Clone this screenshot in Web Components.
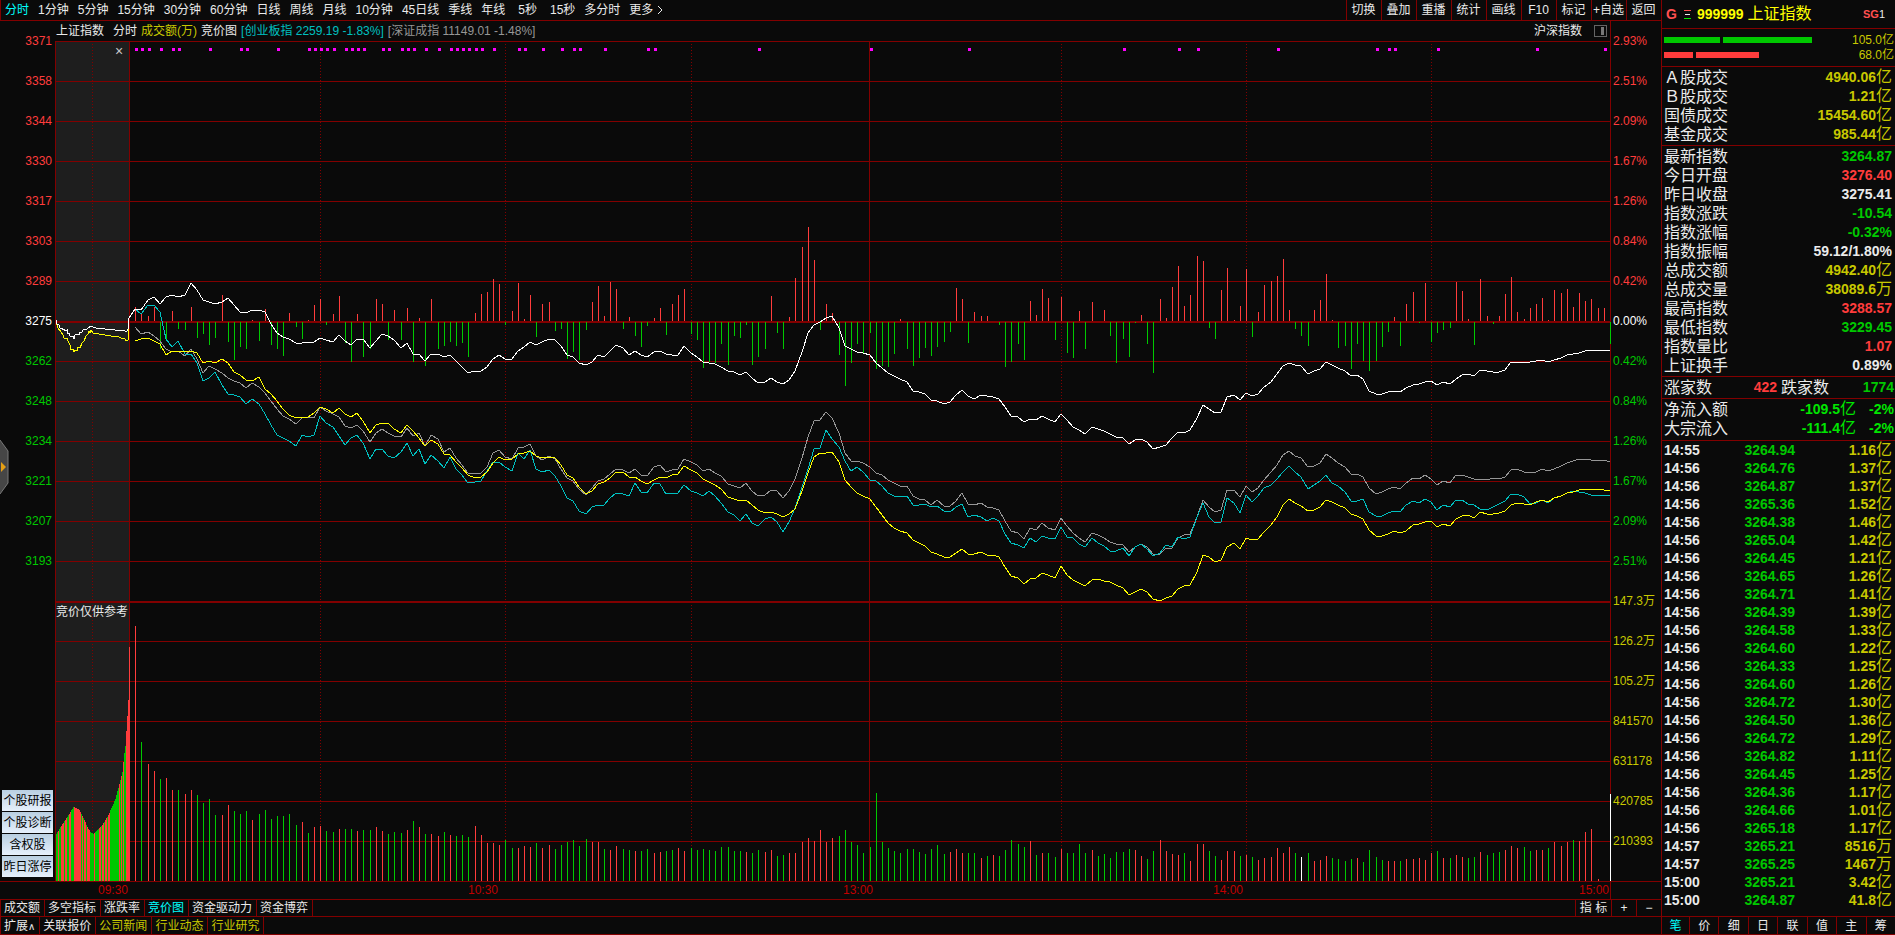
<!DOCTYPE html>
<html lang="zh-CN">
<head>
<meta charset="utf-8">
<meta name="viewport" content="width=device-width, initial-scale=1">
<title>上证指数 999999</title>
<style>
    :root {
        --bg: #0a0a0a;
        --line: #820000;
        --red: #ff3c3c;
        --green: #00c800;
        --lime: #00e600;
        --yellow: #c8c800;
        --white: #ebebeb;
        --cyan: #00ffff;
        --gray: #969696;
    }

    body {
        margin: 0;
        background: var(--bg);
        color: var(--white);
        font: 12px/16px "Liberation Sans", "Noto Sans CJK SC", sans-serif;
    }
</style>
</head>
<body>

<market-app>
    <period-bar slot="toolbar"></period-bar>
    <chart-header slot="header"></chart-header>
    <value-axis slot="left" side="left"></value-axis>
    <intraday-plot slot="plot"></intraday-plot>
    <value-axis slot="right" side="right"></value-axis>
    <time-axis slot="time"></time-axis>
    <tab-strip slot="tabs" items="成交额,多空指标,涨跌率,竞价图,资金驱动力,资金博弈" active="竞价图">
        <button class="wide">指 标</button>
        <button>+</button>
        <button>−</button>
    </tab-strip>
    <tab-strip slot="news" items="扩展∧,关联报价,公司新闻,行业动态,行业研究" highlight="公司新闻,行业动态,行业研究"></tab-strip>
    <side-links slot="float"></side-links>
    <drawer-handle slot="float"></drawer-handle>

    <quote-title slot="quote"></quote-title>
    <flow-bars slot="quote"></flow-bars>
    <quote-table slot="quote" group="turnover"></quote-table>
    <quote-table slot="quote" group="index"></quote-table>
    <breadth-row slot="quote"></breadth-row>
    <inflow-table slot="quote"></inflow-table>
    <tick-table slot="quote"></tick-table>
    <detail-tabs slot="foot"></detail-tabs>
</market-app>

<script>
const buttonReset = `
    button {
        margin: 0;
        padding: 0;
        border: 0;
        background: none;
        color: inherit;
        font: inherit;
        white-space: nowrap;
        cursor: pointer;
    }
`;

// "4940.06亿" -> bold number + regular unit
function withUnit(text) {
    const m = text.match(/^(.*?)([亿万]?)$/);
    return m[2] ? `${m[1]}<i>${m[2]}</i>` : text;
}

class MarketApp extends HTMLElement {
    constructor() {
        super();
        this.attachShadow({ mode: 'open' }).innerHTML = `
            <style>
                :host {
                    display: grid;
                    grid-template-columns: minmax(0, 1fr) 234px;
                    min-height: 100vh;
                    box-sizing: border-box;
                    position: relative;
                    overflow: hidden;
                    border-bottom: 1px solid var(--line);
                }
                main, aside {
                    display: flex;
                    flex-direction: column;
                }
                main {
                    min-width: 0;
                }
                .chart {
                    flex: 1;
                    display: grid;
                    grid-template-columns: 55px minmax(0, 1fr) 50px;
                }
                aside {
                    box-sizing: border-box;
                    border-left: 1px solid var(--line);
                }
                .spacer {
                    flex: 1;
                }
            </style>
            <main>
                <slot name="toolbar"></slot>
                <slot name="header"></slot>
                <div class="chart">
                    <slot name="left"></slot>
                    <slot name="plot"></slot>
                    <slot name="right"></slot>
                </div>
                <slot name="time"></slot>
                <slot name="tabs"></slot>
                <slot name="news"></slot>
            </main>
            <aside>
                <slot name="quote"></slot>
                <div class="spacer"></div>
                <slot name="foot"></slot>
            </aside>
            <slot name="float"></slot>
        `;
    }
}

class PeriodBar extends HTMLElement {
    constructor() {
        super();
        const periods = ['分时', '1分钟', '5分钟', '15分钟', '30分钟', '60分钟', '日线', '周线', '月线',
            '10分钟', '45日线', '季线', '年线', '5秒', '15秒', '多分时', '更多'];
        const tools = ['切换', '叠加', '重播', '统计', '画线', 'F10', '标记', '+自选', '返回'];
        this.attachShadow({ mode: 'open' }).innerHTML = `
            <style>
                ${buttonReset}
                :host {
                    display: flex;
                    justify-content: space-between;
                    height: 20px;
                    border-left: 1px solid var(--line);
                    border-bottom: 1px solid var(--line);
                }
                nav {
                    display: flex;
                    gap: 9px;
                    padding-left: 4px;
                }
                nav button:first-child {
                    color: var(--cyan);
                }
                .short {
                    padding-left: 4px;
                }
                nav button:last-child {
                    display: flex;
                    align-items: center;
                    gap: 4px;
                }
                .tools {
                    display: flex;
                }
                .tools button {
                    box-sizing: border-box;
                    width: 35px;
                    padding-right: 1px;
                    border-left: 1px solid var(--line);
                }
            </style>
            <nav>
                ${periods.map(p => `<button${p.endsWith('秒') ? ' class="short"' : ''}>${p}${p === '更多'
                    ? '<svg width="6" height="10"><path d="M1 1l4 4-4 4" fill="none" stroke="currentColor"/></svg>' : ''}</button>`).join('')}
            </nav>
            <div class="tools">${tools.map(t => `<button>${t}</button>`).join('')}</div>
        `;
    }
}

class ChartHeader extends HTMLElement {
    constructor() {
        super();
        this.attachShadow({ mode: 'open' }).innerHTML = `
            <style>
                ${buttonReset}
                :host {
                    display: flex;
                    align-items: center;
                    height: 20px;
                    gap: 4px;
                    margin-right: 50px;
                    padding: 0 3px 0 56px;
                    border-right: 1px solid var(--line);
                    white-space: nowrap;
                }
                .name { margin-right: 5px; }
                .amount { color: var(--yellow); }
                .cyb { color: #00c0c0; }
                .szc { color: var(--gray); }
                .market { margin-left: auto; margin-right: 8px; }
                button { display: flex; }
            </style>
            <span class="name">上证指数</span>
            <span>分时</span>
            <span class="amount">成交额(万)</span>
            <span>竞价图</span>
            <span class="cyb">[创业板指 2259.19 -1.83%]</span>
            <span class="szc">[深证成指 11149.01 -1.48%]</span>
            <span class="market">沪深指数</span>
            <button aria-label="侧栏">
                <svg width="13" height="12" viewBox="0 0 13 12" shape-rendering="crispEdges">
                    <rect x=".5" y=".5" width="12" height="11" rx="1" fill="none" stroke="#646464"/>
                    <rect x="7" y="2" width="3" height="8" fill="#787878"/>
                </svg>
            </button>
        `;
    }
}

class ValueAxis extends HTMLElement {
    constructor() {
        super();
        const prices = [3371, 3358, 3344, 3330, 3317, 3303, 3289, 3275, 3262, 3248, 3234, 3221, 3207, 3193];
        const percents = ['2.93', '2.51', '2.09', '1.67', '1.26', '0.84', '0.42', '0.00',
            '0.42', '0.84', '1.26', '1.67', '2.09', '2.51'].map(v => v + '%');
        const volumes = ['147.3万', '126.2万', '105.2万', '841570', '631178', '420785', '210393'];
        const labels = this.getAttribute('side') === 'left' ? prices : percents.concat(volumes);
        const tone = i => i < 7 ? 'up' : i === 7 ? 'flat' : i < 14 ? 'down' : 'vol';
        this.attachShadow({ mode: 'open' }).innerHTML = `
            <style>
                :host {
                    display: grid;
                    grid-template-rows: repeat(21, minmax(0, 1fr));
                    align-items: center;
                    margin-top: -20px;
                    margin-bottom: 20px;
                    white-space: nowrap;
                }
                :host([side="left"]) {
                    justify-items: end;
                    padding-right: 3px;
                }
                :host([side="right"]) {
                    padding-left: 2px;
                }
                .up { color: var(--red); }
                .flat { color: #ffffff; }
                .down { color: var(--green); }
                .vol { color: var(--yellow); }
            </style>
            ${labels.map((l, i) => `<span class="${tone(i)}">${l}</span>`).join('')}
        `;
    }
}

/* One value per minute, as an offset in plot units from the previous close (positive is down). */
const priceLine = [-4,-13,-12,-22,-25,-18,-25,-27,-25,-27,-39,-32,-22,-20,-18,-20,-24,-17,-10,-9,-12,-12,-10,2,11,15,17,21,21,20,
    20,16,18,20,13,19,23,17,17,26,19,12,14,18,26,21,32,32,39,32,32,35,33,39,45,51,49,49,45,37,
    33,37,37,29,25,20,23,20,17,18,24,33,35,41,43,40,33,35,29,23,26,33,29,33,35,30,29,32,33,33,
    24,31,35,40,41,42,45,49,50,53,50,56,61,60,56,60,62,58,49,30,11,3,0,-4,-6,6,24,27,30,31,
    33,41,46,51,54,57,60,69,70,72,78,79,82,80,73,68,74,77,73,74,75,77,85,94,95,100,97,98,94,97,
    100,92,98,105,108,112,105,107,109,112,115,116,122,118,117,120,127,125,123,116,110,111,108,96,83,87,91,90,75,73,
    78,71,74,72,65,60,52,44,41,43,44,52,49,47,40,43,46,49,54,53,57,69,72,72,70,69,70,66,63,62,
    60,59,63,60,62,57,53,52,54,48,49,50,50,48,40,40,40,40,39,38,40,38,36,33,32,31,29,28,28,28,29];

const averageLine = [19,17,16,19,22,33,29,29,29,29,31,41,39,41,37,41,50,53,58,59,55,67,72,79,87,93,96,95,95,91,
    85,87,91,86,92,95,91,99,111,103,101,101,107,111,103,109,116,124,118,122,132,133,140,146,153,156,155,150,141,135,
    138,137,132,131,129,134,136,135,136,143,153,156,165,172,169,162,160,156,150,150,155,155,159,162,158,155,156,153,152,144,
    148,151,157,160,163,167,175,177,179,178,183,188,191,190,192,195,192,187,169,151,135,131,131,130,140,158,165,171,174,177,
    185,193,201,206,209,211,218,221,224,230,232,235,235,231,227,232,232,230,233,233,235,245,254,256,262,257,256,251,253,256,
    244,253,258,261,264,258,257,259,260,263,266,273,270,267,270,277,279,276,274,267,264,263,250,233,235,240,238,225,221,227,
    216,218,217,210,203,195,183,177,181,184,189,188,185,178,180,183,186,192,194,197,208,214,214,212,209,211,209,203,202,200,
    199,205,202,204,197,194,193,196,190,192,192,191,189,183,181,182,183,180,178,180,176,174,171,170,168,167,167,167,168,169];

const componentLine = [5,12,10,14,19,27,30,29,34,27,37,51,44,47,51,56,59,61,66,61,65,71,79,87,94,97,102,96,95,96,
    85,89,92,95,104,106,103,109,120,111,107,111,114,115,106,114,111,124,113,117,130,126,136,143,151,151,151,145,131,128,
    135,137,126,125,122,134,138,134,137,147,156,159,167,173,166,159,157,152,147,148,151,147,153,154,145,143,150,148,147,137,
    140,143,149,147,151,154,162,164,166,161,169,174,173,168,169,176,169,157,136,115,99,98,90,96,111,131,139,139,141,145,
    151,153,158,161,164,164,174,177,178,183,178,184,184,179,171,182,183,181,185,186,188,199,209,211,217,206,208,201,206,208,
    196,204,211,216,220,211,213,216,220,222,223,230,225,222,225,232,232,226,226,216,213,212,195,178,185,190,188,168,168,175,
    164,170,166,158,150,143,133,129,134,136,145,144,141,132,136,141,145,152,152,155,166,172,170,167,165,167,161,156,157,153,
    157,163,159,161,153,153,155,157,157,158,156,157,155,148,147,150,151,150,147,149,147,144,141,139,137,137,138,138,138,140];

const growthLine = [-13,-8,-17,-17,-10,17,25,19,32,32,41,59,56,50,63,72,73,75,82,77,82,92,103,113,116,119,124,113,115,113,
    94,101,105,114,123,116,113,121,137,127,127,134,136,130,121,134,127,142,133,139,146,135,147,153,161,160,159,149,140,140,
    145,149,131,137,128,147,150,148,154,164,176,179,189,192,185,183,183,176,171,172,174,161,170,171,161,162,172,171,171,163,
    169,171,174,169,174,181,190,193,199,192,201,204,197,195,200,210,200,186,165,147,127,126,108,117,125,139,149,145,150,158,
    159,164,171,174,175,174,183,183,182,185,184,189,190,185,182,195,193,195,199,196,199,212,221,223,226,216,220,214,216,217,
    205,215,216,222,225,216,221,224,229,229,226,234,225,222,227,234,231,223,225,215,217,215,195,181,195,201,200,176,181,191,
    173,180,174,166,163,157,150,144,150,155,167,163,159,153,161,164,170,179,179,177,190,194,194,191,189,190,183,179,181,177,
    180,188,183,185,178,178,182,183,187,188,185,182,179,172,172,175,182,181,178,181,176,174,171,169,170,171,173,173,173,173];

const momentum = [-15,-8,-6,-15,27,18,-11,7,8,-15,16,12,23,16,-27,20,38,25,27,-2,19,-13,23,27,34,-9,5,17,-2,-17,
    -23,3,-8,-26,21,40,-8,35,27,-23,-18,18,-12,18,-14,40,-4,44,-23,27,24,20,24,21,35,-9,-28,-30,-43,-38,
    3,-11,-39,-3,-27,15,-18,-20,9,7,37,30,38,8,-20,-36,-6,-40,-33,7,-5,14,25,4,-4,-14,13,-18,-27,-33,
    12,18,46,40,41,22,43,14,16,3,43,35,27,-26,11,27,-5,-44,-75,-95,-62,8,-18,-9,33,64,41,22,31,11,
    47,44,45,32,-3,27,44,36,26,34,25,20,10,-34,-23,21,-10,-6,-6,0,3,45,40,22,38,-21,-7,-33,-24,18,
    -25,31,36,-11,27,-20,0,-12,14,41,17,35,1,-7,22,51,-23,-4,-35,-56,-16,-27,-66,-61,6,17,-32,-54,-2,-16,
    -53,15,-10,-37,-41,-46,-63,-12,7,14,24,-12,-22,-48,-2,26,24,47,22,39,49,39,25,10,-5,24,-18,-30,1,-39,
    20,11,8,6,-40,-31,-3,23,-43,-6,2,-6,-28,-45,-10,-3,-14,-18,-24,-2,-32,-29,-33,-15,-29,-21,-23,-14,-14,22];

// r = rising minute, g = falling, w = unchanged
const volume = ('r255 g139 r117 r110 g102 r103 r91 g91 r87 r91 g86 g78 g82 g66 r66 r76 g70 g67 g70 r61 g67 g71 g62 g65 g65 g67 g56 r59 g48 r54 ' +
    'r55 g50 g49 r52 g52 g52 r50 g51 g51 r54 r50 g47 g49 g48 r51 g60 r54 g47 r47 r45 g49 r46 g45 g46 g44 r55 r46 r38 r38 r36 ' +
    'g41 g33 r33 r35 r34 g38 r33 r36 g32 g36 g39 g41 g35 g42 r39 r39 g32 r31 r35 g32 g31 r30 g30 g32 r28 r29 g30 g31 r33 r30 ' +
    'g33 g31 g32 g31 g30 g34 g34 g30 g30 r29 g28 g31 r29 r31 g25 g26 r28 r28 r39 r43 r40 r51 r39 r43 g45 g51 g39 g36 g28 g34 ' +
    'g88 g39 g33 g30 g28 g32 g32 g29 g27 g32 g36 g27 r29 r32 r28 g28 g28 r23 g25 r26 g25 g31 g41 g37 g34 r40 g26 r28 g28 g24 ' +
    'r32 g28 g28 g37 g28 r31 g25 g27 g23 g29 g29 g32 r31 r25 g22 g30 r41 r30 r27 r26 g28 r20 r37 r37 g30 g25 r21 r30 r30 g25 ' +
    'r26 g24 r21 r23 r24 r33 r28 r34 g28 w24 g28 r20 r21 r25 g23 g22 g20 g22 r23 g19 g31 g24 g21 r20 r20 g20 r22 r22 r23 r21 ' +
    'r28 g30 r23 g23 r26 r24 g23 g24 r29 g26 g28 g29 r31 r35 r33 g34 g30 r31 r31 g33 r39 r35 r39 g41 r40 r49 r52 r2 r0 w87').split(' ');

// minutes carrying an event marker
const markers = [1,2,3,5,7,8,13,18,19,24,29,30,31,32,33,35,36,37,38,41,42,44,45,46,48,50,52,53,54,55,56,57,59,63,64,67,70,72,73,77,84,85,
    102,120,136,161,170,173,186,202,204,205,212,228,239];

// opening auction: [column, height] knots and the colour of each column
const auctionKnots = [[0,47],[6,57],[11,64],[17,74],[20,73],[23,71],[27,63],[31,54],[34,49],[37,47],[41,51],[46,56],[52,66],
    [59,82],[63,97],[66,109],[68,128],[69,135],[70,150],[71,165],[72,181],[73,234]];
const auctionColors = 'GGRGGRRRGRRGGRRGGGRRRRRRRGRGRRGRRRGGGGRGGGGRRGRRGRRGRRGGGGGGGGGRGRGRGGRRRR';
const auctionWhite = '1,279 2,283 4,284 5,287 7,287 8,289 9,288 10,290 12,289 12,292 14,292 15,295 18,295 19,298 20,294 22,293 24,294 25,291 27,291 28,289 32,288 36,285 38,286 41,287 50,288 58,288 60,289 66,289 70,290 71,291 72,290 73,288 74,277';
const auctionYellow = '1,281 3,287 6,291 8,294 9,297 12,297 13,300 15,304 16,309 18,308 19,311 20,309 22,310 23,306 25,307 27,302 29,300 31,295 33,293 34,290 35,292 36,289 38,292 44,293 50,294 56,295 62,295 66,297 70,298 71,300 73,299 74,288';

const W = 1556, H = 840, ZERO = 281, OPEN = 74;
const minuteX = m => Math.round(OPEN + m * (W - 1 - OPEN) / 240);

class IntradayPlot extends HTMLElement {
    constructor() {
        super();
        this.attachShadow({ mode: 'open' }).innerHTML = `
            <style>
                ${buttonReset}
                :host {
                    display: block;
                    position: relative;
                }
                svg {
                    position: absolute;
                    width: 100%;
                    height: 100%;
                    shape-rendering: crispEdges;
                }
                .line { fill: none; }
                .close, .note {
                    position: absolute;
                    left: 1px;
                    top: 67%;
                }
                .close {
                    left: 60px;
                    top: 2px;
                    color: #c8c8c8;
                    font-size: 14px;
                }
            </style>
            <svg viewBox="0 0 ${W} ${H}" preserveAspectRatio="none" role="img" aria-label="上证指数分时走势">
                <rect width="${OPEN}" height="${H}" fill="#1e1e1e"/>
                ${this.grid()}
                ${this.auction()}
                ${this.volumeBars()}
                ${this.momentumBars()}
                ${this.line(componentLine, '#969696')}
                ${this.line(growthLine, '#00c0c0')}
                ${this.line(averageLine, '#ffff00')}
                ${this.line(priceLine, '#ffffff', 0)}
                ${markers.map(m => `<rect x="${minuteX(m)}" y="7" width="3" height="3" fill="#ff00ff"/>`).join('')}
            </svg>
            <button class="close" aria-label="关闭">×</button>
            <span class="note">竞价仅供参考</span>
        `;
    }

    bar(x, y, h, color) {
        return `<rect x="${x}" y="${y}" width="1" height="${h}" fill="${color}"/>`;
    }

    grid() {
        const red = '#820000';
        let out = '';
        for (let y = 0; y < H; y += 40) {
            const thick = y === 280 || y === 560;
            out += `<rect y="${y}" width="${W}" height="${thick ? 2 : 1}" fill="${red}"/>`;
        }
        for (const x of [0, OPEN, minuteX(120) - 1, W - 1]) {
            out += this.bar(x, 0, H, red);
        }
        for (const x of [37, ...[31, 61, 91, 151, 181, 211].map(minuteX)]) {
            out += `<path d="M${x}.5 3V${H}" stroke="${red}" stroke-dasharray="1 2"/>`;
        }
        return out;
    }

    auction() {
        let out = '';
        for (let k = 0; k < auctionKnots.length - 1; k++) {
            const [c0, h0] = auctionKnots[k];
            const [c1, h1] = auctionKnots[k + 1];
            const last = k === auctionKnots.length - 2 ? c1 : c1 - 1;
            for (let c = c0; c <= last; c++) {
                const h = Math.round(h0 + (h1 - h0) * (c - c0) / (c1 - c0));
                out += this.bar(c + 1, H - h, h, auctionColors[c] === 'R' ? '#ff3c3c' : '#00c800');
            }
        }
        out += `<polyline class="line" points="${auctionYellow}" stroke="#ffff00"/>`;
        out += `<polyline class="line" points="${auctionWhite}" stroke="#ffffff"/>`;
        return out;
    }

    volumeBars() {
        const colors = { r: '#ff3c3c', g: '#00c800', w: '#ffffff' };
        return volume.map((v, i) => this.bar(minuteX(i + 1), H - v.slice(1), v.slice(1), colors[v[0]])).join('');
    }

    momentumBars() {
        return momentum.map((d, i) => d < 0
            ? this.bar(minuteX(i + 1), ZERO + d, -d - 1, '#ff3c3c')
            : this.bar(minuteX(i + 1), ZERO, d, '#00c800')).join('');
    }

    line(values, color, first = 1) {
        const points = values.map((d, i) => `${minuteX(i + first)},${ZERO + d}`).join(' ');
        return `<polyline class="line" points="${points}" stroke="${color}"/>`;
    }
}

class TimeAxis extends HTMLElement {
    constructor() {
        super();
        this.attachShadow({ mode: 'open' }).innerHTML = `
            <style>
                :host {
                    display: grid;
                    grid-template-columns: 55px minmax(0, 74fr) minmax(0, 370fr) minmax(0, 375fr) minmax(0, 370fr) minmax(0, 366fr) 1px 50px;
                    height: 17px;
                    border-top: 1px solid var(--line);
                    color: #c00000;
                    text-align: right;
                }
                time {
                    padding-right: 1px;
                }
                i {
                    background: var(--line);
                }
            </style>
            <span></span><time>09:30</time><time>10:30</time><time>13:00</time><time>14:00</time><time>15:00</time><i></i>
        `;
    }
}

class TabStrip extends HTMLElement {
    constructor() {
        super();
        const active = this.getAttribute('active');
        const highlight = (this.getAttribute('highlight') || '').split(',');
        const items = this.getAttribute('items').split(',');
        this.attachShadow({ mode: 'open' }).innerHTML = `
            <style>
                ${buttonReset}
                :host {
                    display: flex;
                    height: 16px;
                    border-top: 1px solid var(--line);
                    border-left: 1px solid var(--line);
                    line-height: 16px;
                }
                :host([slot="news"]) {
                    height: 17px;
                }
                button {
                    padding: 0 4px 0 3px;
                    border-right: 1px solid var(--line);
                }
                small {
                    font: 10px "DejaVu Sans", sans-serif;
                }
                .active { color: var(--cyan); }
                .highlight { color: var(--yellow); }
                div {
                    display: flex;
                    margin-left: auto;
                }
                ::slotted(button) {
                    box-sizing: border-box;
                    width: 25px;
                    margin: 0;
                    padding: 0;
                    border: 0;
                    border-left: 1px solid var(--line);
                    background: none;
                    color: inherit;
                    font: inherit;
                    white-space: nowrap;
                }
                ::slotted(button.wide) {
                    width: 36px;
                }
            </style>
            ${items.map(t => `<button class="${t === active ? 'active' : highlight.includes(t) ? 'highlight' : ''}">${t.replace('∧', '<small>∧</small>')}</button>`).join('')}
            <div><slot></slot></div>
        `;
    }
}

class SideLinks extends HTMLElement {
    constructor() {
        super();
        this.attachShadow({ mode: 'open' }).innerHTML = `
            <style>
                ${buttonReset}
                :host {
                    position: absolute;
                    left: 2px;
                    bottom: 57px;
                    display: grid;
                    gap: 1px;
                    width: 51px;
                }
                button {
                    height: 21px;
                    background: linear-gradient(#b9cfe1, #e6f0fc);
                    color: #000000;
                }
            </style>
            <button>个股研报</button>
            <button>个股诊断</button>
            <button>含权股</button>
            <button>昨日涨停</button>
        `;
    }
}

class DrawerHandle extends HTMLElement {
    constructor() {
        super();
        this.attachShadow({ mode: 'open' }).innerHTML = `
            <style>
                ${buttonReset}
                :host {
                    position: absolute;
                    left: 0;
                    top: 50%;
                    margin-top: -27px;
                }
                button, svg { display: block; }
            </style>
            <button aria-label="展开">
                <svg width="9" height="54" viewBox="0 0 9 54">
                    <path d="M0 0L8 11V43L0 54Z" fill="#464646"/>
                    <path d="M0 0L8 11V43L0 54" fill="none" stroke="#787878"/>
                    <path d="M1 22L6 27L1 32Z" fill="#e6a014"/>
                </svg>
            </button>
        `;
    }
}

class QuoteTitle extends HTMLElement {
    constructor() {
        super();
        this.attachShadow({ mode: 'open' }).innerHTML = `
            <style>
                :host {
                    display: flex;
                    align-items: center;
                    height: 28px;
                    padding: 0 10px 0 4px;
                    border-bottom: 1px solid var(--line);
                    color: #ffff00;
                    font-size: 16px;
                    white-space: nowrap;
                }
                .g {
                    color: #ff5050;
                    font-size: 14px;
                    font-weight: bold;
                }
                svg { margin: 0 6px 0 7px; }
                b {
                    margin-right: 4px;
                    font-size: 14px;
                }
                .sg {
                    margin-left: auto;
                    color: var(--white);
                    font-size: 11px;
                }
                .sg b {
                    margin: 0;
                    color: #ff5050;
                    font-size: 11px;
                }
            </style>
            <span class="g">G</span>
            <svg width="7" height="9" shape-rendering="crispEdges">
                <path d="M0 .5H7" stroke="#ff5050"/>
                <path d="M1 4.5H6" stroke="#ebebeb"/>
                <path d="M0 8.5H7" stroke="#00e600"/>
            </svg>
            <b>999999</b>
            <span>上证指数</span>
            <span class="sg"><b>SG</b>1</span>
        `;
    }
}

class FlowBars extends HTMLElement {
    constructor() {
        super();
        this.attachShadow({ mode: 'open' }).innerHTML = `
            <style>
                :host {
                    display: grid;
                    grid-template-rows: 15px 15px;
                    align-content: center;
                    height: 37px;
                    padding: 0 1px 0 2px;
                    border-bottom: 1px solid var(--line);
                }
                div {
                    display: flex;
                    align-items: center;
                    gap: 3px;
                    color: var(--yellow);
                    line-height: 15px;
                }
                i {
                    flex: none;
                    width: var(--w);
                    height: 6px;
                    background: var(--green);
                }
                .sell i { background: var(--red); }
                span {
                    margin-left: auto;
                }
            </style>
            <div><i style="--w: 56px"></i><i style="--w: 89px"></i><span>105.0亿</span></div>
            <div class="sell"><i style="--w: 29px"></i><i style="--w: 63px"></i><span>68.0亿</span></div>
        `;
    }
}

const tableStyle = `
    :host {
        display: block;
    }
    table {
        width: 100%;
        border-collapse: collapse;
        table-layout: fixed;
    }
    tr {
        height: 19px;
    }
    th, td {
        padding: 0;
        line-height: 19px;
        white-space: nowrap;
    }
    th {
        font-size: 16px;
        font-weight: normal;
        text-align: left;
    }
    td {
        font-size: 14px;
        font-weight: bold;
        text-align: right;
    }
    i {
        font-size: 16px;
        font-style: normal;
        font-weight: normal;
        line-height: 1;
    }
    .y { color: var(--yellow); }
    .g { color: var(--green); }
    .r { color: var(--red); }
`;

const quotes = {
    turnover: [
        ['Ａ股成交', '4940.06亿', 'y'],
        ['Ｂ股成交', '1.21亿', 'y'],
        ['国债成交', '15454.60亿', 'y'],
        ['基金成交', '985.44亿', 'y'],
    ],
    index: [
        ['最新指数', '3264.87', 'g'],
        ['今日开盘', '3276.40', 'r'],
        ['昨日收盘', '3275.41', ''],
        ['指数涨跌', '-10.54', 'g'],
        ['指数涨幅', '-0.32%', 'g'],
        ['指数振幅', '59.12/1.80%', ''],
        ['总成交额', '4942.40亿', 'y'],
        ['总成交量', '38089.6万', 'y'],
        ['最高指数', '3288.57', 'r'],
        ['最低指数', '3229.45', 'g'],
        ['指数量比', '1.07', 'r'],
        ['上证换手', '0.89%', ''],
    ],
};

class QuoteTable extends HTMLElement {
    constructor() {
        super();
        const rows = quotes[this.getAttribute('group')];
        this.attachShadow({ mode: 'open' }).innerHTML = `
            <style>
                ${tableStyle}
                :host {
                    padding: 1px 3px 1px 2px;
                    border-bottom: 1px solid var(--line);
                }
            </style>
            <table>
                ${rows.map(([name, value, tone]) => `<tr><th scope="row">${name}</th><td class="${tone}">${withUnit(value)}</td></tr>`).join('')}
            </table>
        `;
    }
}

class BreadthRow extends HTMLElement {
    constructor() {
        super();
        this.attachShadow({ mode: 'open' }).innerHTML = `
            <style>
                ${tableStyle}
                :host {
                    padding: 1px 1px 1px 2px;
                    border-bottom: 1px solid var(--line);
                }
                th + td + th { padding-left: 4px; }
                .label { width: 55px; }
            </style>
            <table>
                <tr>
                    <th scope="row" class="label">涨家数</th><td class="r">422</td>
                    <th scope="row" class="label">跌家数</th><td class="g">1774</td>
                </tr>
            </table>
        `;
    }
}

class InflowTable extends HTMLElement {
    constructor() {
        super();
        this.attachShadow({ mode: 'open' }).innerHTML = `
            <style>
                ${tableStyle}
                :host {
                    padding: 1px 1px 2px 2px;
                    border-bottom: 1px solid var(--line);
                }
                td { color: var(--lime); }
                td:last-child { width: 38px; }
            </style>
            <table>
                <tr><th scope="row">净流入额</th><td>-109.5<i>亿</i></td><td>-2%</td></tr>
                <tr><th scope="row">大宗流入</th><td>-111.4<i>亿</i></td><td>-2%</td></tr>
            </table>
        `;
    }
}

const ticks = [
    ['14:55', '3264.94', '1.16亿'],
    ['14:56', '3264.76', '1.37亿'],
    ['14:56', '3264.87', '1.37亿'],
    ['14:56', '3265.36', '1.52亿'],
    ['14:56', '3264.38', '1.46亿'],
    ['14:56', '3265.04', '1.42亿'],
    ['14:56', '3264.45', '1.21亿'],
    ['14:56', '3264.65', '1.26亿'],
    ['14:56', '3264.71', '1.41亿'],
    ['14:56', '3264.39', '1.39亿'],
    ['14:56', '3264.58', '1.33亿'],
    ['14:56', '3264.60', '1.22亿'],
    ['14:56', '3264.33', '1.25亿'],
    ['14:56', '3264.60', '1.26亿'],
    ['14:56', '3264.72', '1.30亿'],
    ['14:56', '3264.50', '1.36亿'],
    ['14:56', '3264.72', '1.29亿'],
    ['14:56', '3264.82', '1.11亿'],
    ['14:56', '3264.45', '1.25亿'],
    ['14:56', '3264.36', '1.17亿'],
    ['14:56', '3264.66', '1.01亿'],
    ['14:56', '3265.18', '1.17亿'],
    ['14:57', '3265.21', '8516万'],
    ['14:57', '3265.25', '1467万'],
    ['15:00', '3265.21', '3.42亿'],
    ['15:00', '3264.87', '41.8亿'],
];

class TickTable extends HTMLElement {
    constructor() {
        super();
        this.attachShadow({ mode: 'open' }).innerHTML = `
            <style>
                ${tableStyle}
                :host {
                    padding: 0 3px 0 2px;
                }
                tr { height: 18px; }
                td { line-height: 18px; }
                td:first-child {
                    width: 40px;
                    text-align: left;
                }
                td:nth-child(2) { width: 91px; }
            </style>
            <table>
                ${ticks.map(([time, price, amount]) => `<tr><td>${time}</td><td class="g">${price}</td><td class="y">${withUnit(amount)}</td></tr>`).join('')}
            </table>
        `;
    }
}

class DetailTabs extends HTMLElement {
    constructor() {
        super();
        const tabs = ['笔', '价', '细', '日', '联', '值', '主', '筹'];
        this.attachShadow({ mode: 'open' }).innerHTML = `
            <style>
                ${buttonReset}
                :host {
                    display: grid;
                    grid-template-columns: 27px repeat(7, minmax(0, 1fr));
                    height: 17px;
                    border-top: 1px solid var(--line);
                }
                button {
                    border-left: 1px solid var(--line);
                }
                button:first-of-type {
                    border-left: 0;
                    color: var(--cyan);
                }
            </style>
            ${tabs.map(t => `<button>${t}</button>`).join('')}
        `;
    }
}

customElements.define('market-app', MarketApp);
customElements.define('period-bar', PeriodBar);
customElements.define('chart-header', ChartHeader);
customElements.define('value-axis', ValueAxis);
customElements.define('intraday-plot', IntradayPlot);
customElements.define('time-axis', TimeAxis);
customElements.define('tab-strip', TabStrip);
customElements.define('side-links', SideLinks);
customElements.define('drawer-handle', DrawerHandle);
customElements.define('quote-title', QuoteTitle);
customElements.define('flow-bars', FlowBars);
customElements.define('quote-table', QuoteTable);
customElements.define('breadth-row', BreadthRow);
customElements.define('inflow-table', InflowTable);
customElements.define('tick-table', TickTable);
customElements.define('detail-tabs', DetailTabs);
</script>
</body>
</html>
